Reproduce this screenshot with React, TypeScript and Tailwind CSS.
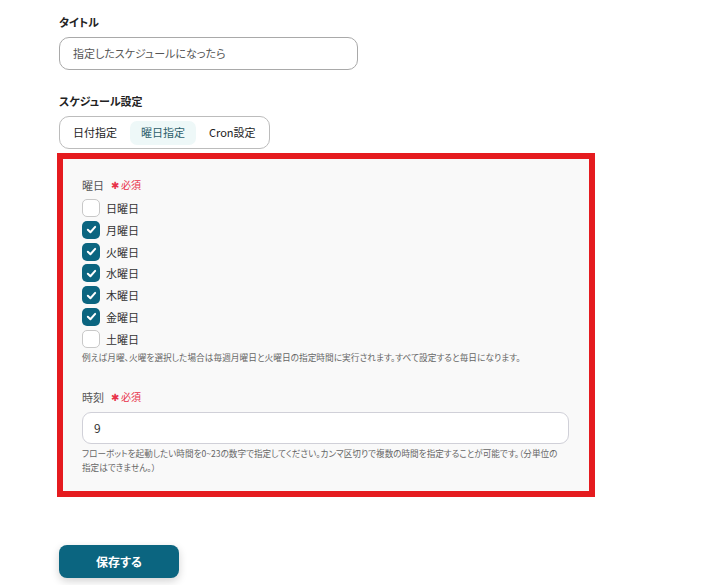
import React from "react";

const days = [
  { label: "日曜日", checked: false },
  { label: "月曜日", checked: true },
  { label: "火曜日", checked: true },
  { label: "水曜日", checked: true },
  { label: "木曜日", checked: true },
  { label: "金曜日", checked: true },
  { label: "土曜日", checked: false },
];

const Required = () => (
  <span className="ml-[7px] inline-flex items-center text-[10px] text-[#e8334a]">
    <span className="mr-[2px] text-[10px] leading-none">✱</span>必須
  </span>
);

const Checkbox = (props: { checked: boolean }) => {
  if (!props.checked) {
    return (
      <span className="block h-[18px] w-[18px] rounded-[5px] border border-[#c8c8c8] bg-white" />
    );
  }
  return (
    <span className="flex h-[18px] w-[18px] items-center justify-center rounded-[5px] bg-[#0b6580]">
      <svg width="11" height="11" viewBox="0 0 12 12" fill="none">
        <path
          d="M2 6.3 4.8 9 10 3.2"
          stroke="white"
          strokeWidth="2.2"
          strokeLinecap="round"
          strokeLinejoin="round"
        />
      </svg>
    </span>
  );
};

const App = () => {
  return (
    <div className="h-[585px] w-[709px] bg-white pl-[59px] pt-[14px] text-[#333] [font-family:'Noto_Sans_CJK_JP',sans-serif] [font-feature-settings:'palt']">
      <div className="text-[11px] font-bold leading-[16px] text-[#222]">タイトル</div>
      <div className="mt-[7px] flex h-[33px] w-[299px] items-center rounded-[10px] border border-[#a9a9a9] px-[13px] text-[11px] text-[#555]">
        指定したスケジュールになったら
      </div>

      <div className="mt-[23px] text-[11px] font-bold leading-[16px] text-[#222]">スケジュール設定</div>
      <div className="mt-[7px] inline-flex h-[33px] items-center gap-[2px] whitespace-nowrap rounded-[10px] border border-[#bcbcbc] px-[2px] text-[11px]">
        <div className="flex h-[24px] shrink-0 items-center rounded-[7px] px-[11px] text-[#222]">日付指定</div>
        <div className="flex h-[24px] shrink-0 items-center rounded-[7px] bg-[#eef8f8] px-[11px] text-[#2d5f6b]">曜日指定</div>
        <div className="flex h-[24px] shrink-0 items-center rounded-[7px] px-[11px] text-[#222]">Cron設定</div>
      </div>

      <div className="ml-[-2px] mt-[4px] h-[344px] w-[538px] border-[6px] border-[#e51b1f] bg-[#f9f9f9] pl-[19px] pr-[20px] pt-[18px]">
        <div className="flex items-center text-[11px] leading-[16px] text-[#555]">
          曜日
          <Required />
        </div>
        <div className="mt-[6px] flex flex-col gap-[3.75px]">
          {days.map((d) => (
            <div key={d.label} className="flex items-center gap-[6px] text-[11px] leading-[18px] text-[#333]">
              <Checkbox checked={d.checked} />
              {d.label}
            </div>
          ))}
        </div>
        <div className="mt-[4px] text-[8.7px] leading-[12px] text-[#666]">
          例えば月曜、火曜を選択した場合は毎週月曜日と火曜日の指定時間に実行されます。すべて設定すると毎日になります。
        </div>

        <div className="mt-[25px] flex items-center text-[11px] leading-[16px] text-[#555]">
          時刻
          <Required />
        </div>
        <div className="mt-[7px] flex h-[32px] w-[487px] items-center rounded-[9px] border border-[#d0d0d8] bg-white px-[11px] text-[12px] text-[#333]">
          9
        </div>
        <div className="mt-[2px] w-[480px] text-[8.6px] leading-[14px] text-[#666]">
          フローボットを起動したい時間を0~23の数字で指定してください。カンマ区切りで複数の時間を指定することが可能です。（分単位の指定はできません。）
        </div>
      </div>

      <button className="mt-[48px] flex h-[33px] w-[120px] items-center justify-center rounded-[8px] bg-[#0b6580] text-[12px] font-bold text-white shadow-[0_3px_8px_rgba(0,0,0,0.18)]">
        保存する
      </button>
    </div>
  );
};

export default App;
